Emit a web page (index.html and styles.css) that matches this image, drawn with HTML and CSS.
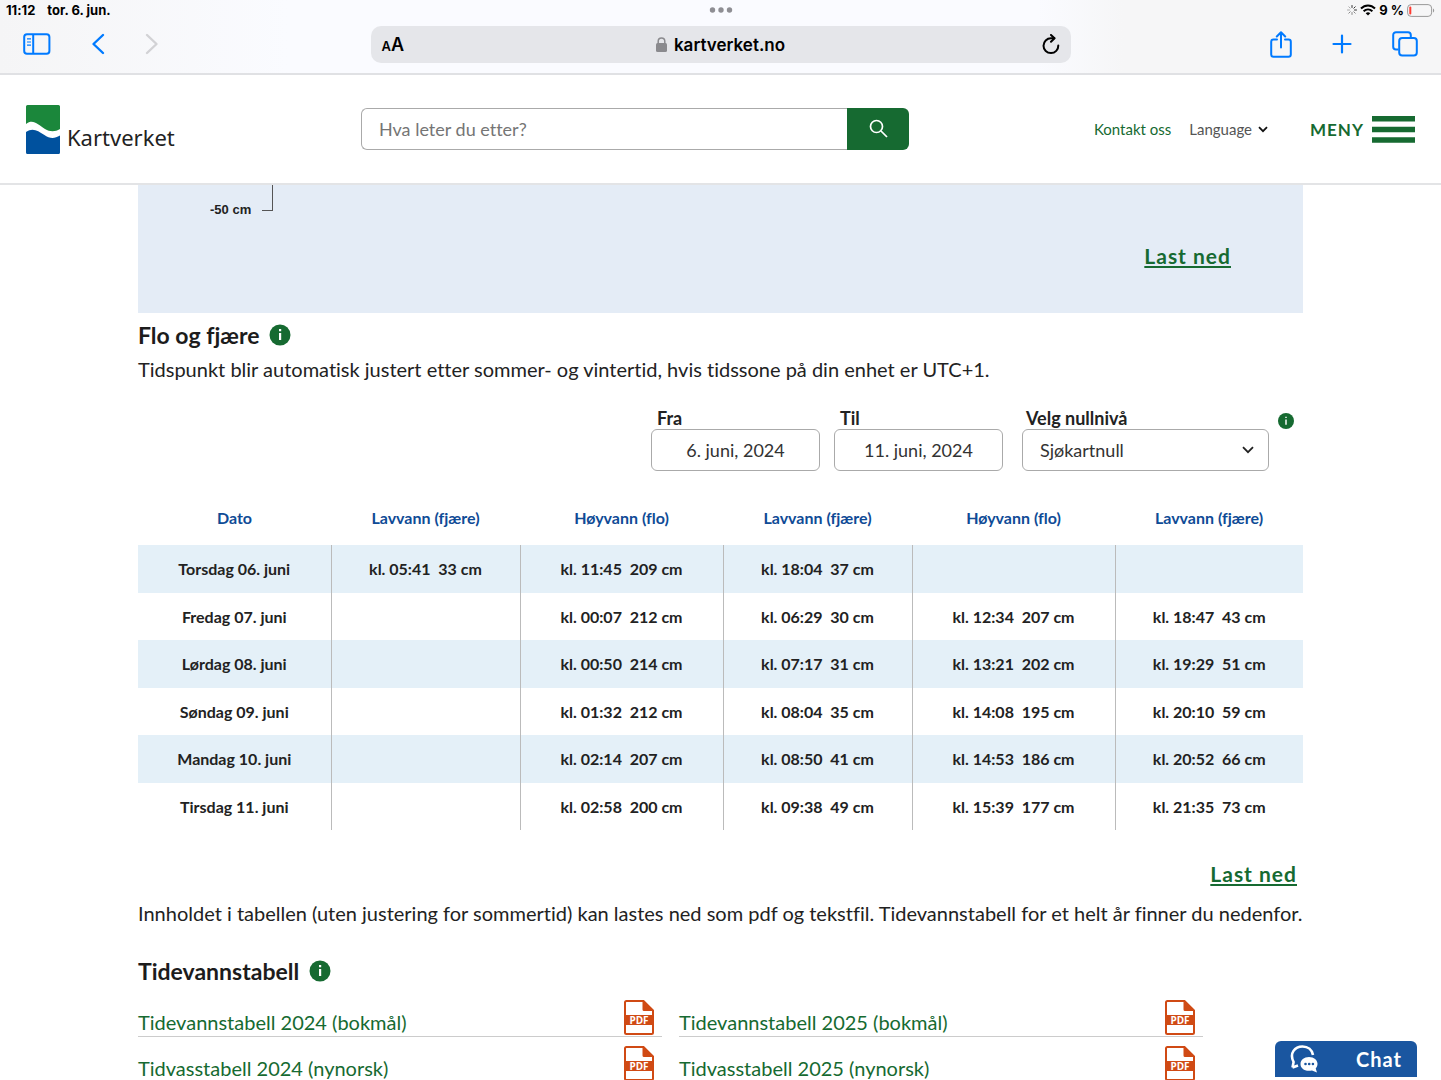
FILE: index.html
```html
<!DOCTYPE html>
<html lang="no">
<head>
<meta charset="utf-8">
<meta name="viewport" content="width=device-width, initial-scale=1">
<title>Kartverket – Flo og fjære</title>
<link rel="stylesheet" href="styles.css">
</head>
<body>
<div class="browser">
  <div class="status">
    <div class="status-left"><span>11:12</span><span>tor. 6. jun.</span></div>
    <svg class="dots" width="24" height="6" viewBox="0 0 24 6" fill="#8e8e93"><circle cx="3.500" cy="3" r="2.700"/><circle cx="12" cy="3" r="2.700"/><circle cx="20.500" cy="3" r="2.700"/></svg>
    <div class="status-right">
      <svg width="10" height="10" viewBox="0 0 10 10" stroke-width="1" stroke-linecap="round" fill="none"><path stroke="#333" d="M5 .5v2M8.200 1.800L6.800 3.200M9.500 5h-2"/><path stroke="#888" d="M8.200 8.200L6.800 6.800M5 9.500v-2M1.800 8.200l1.400-1.400"/><path stroke="#aaa" d="M.5 5h2M1.800 1.800l1.400 1.400"/></svg>
      <svg width="16" height="12" viewBox="0 0 16 12" fill="none" stroke="#000" stroke-width="2"><path d="M1 4.500C5 .4 11 .4 15 4.500M3.600 7.300c2.600-2.500 6.200-2.500 8.800 0"/><path d="M8 11.500L5.700 9.200c1.300-1.200 3.300-1.200 4.600 0z" fill="#000" stroke="none"/></svg>
      <span>9&nbsp;%</span>
      <svg width="28" height="13" viewBox="0 0 28 13"><rect x=".6" y=".6" width="24" height="11.800" rx="3.500" fill="none" stroke="#999"/><rect x="2.300" y="2.500" width="2" height="8" rx="1" fill="#ff3b30"/><path d="M26 4.500c1.600.6 1.600 3.400 0 4z" fill="#999"/></svg>
    </div>
  </div>
  <div class="toolbar">
    <div class="tools-left">
      <button class="tool" aria-label="Sidefelt"><svg width="28" height="22" viewBox="0 0 28 22" fill="none" stroke="#007aff" stroke-width="2"><rect x="1.200" y="1.200" width="25.200" height="19.600" rx="2.800"/><path d="M10.200 1v20"/><path stroke-width="1.200" d="M4 5.800h4M4 9h4M4 12.200h4"/></svg></button>
      <button class="tool" aria-label="Tilbake"><svg width="14" height="22" viewBox="0 0 14 22" fill="none" stroke="#007aff" stroke-width="2.400" stroke-linecap="round" stroke-linejoin="round"><path d="M12 2L2.500 11l9.500 9"/></svg></button>
      <button class="tool" aria-label="Frem"><svg width="14" height="22" viewBox="0 0 14 22" fill="none" stroke="#d2d2d5" stroke-width="2.400" stroke-linecap="round" stroke-linejoin="round"><path d="M2 2l9.500 9L2 20"/></svg></button>
    </div>
    <div class="address">
      <button class="text-size" aria-label="Tekststørrelse"><span class="small-a">A</span>A</button>
      <div class="domain"><svg width="11" height="15" viewBox="0 0 11 15"><rect y="6" width="11" height="9" rx="1.500" fill="#8a8a8e"/><path d="M2.200 6.500V4.300a3.300 3.300 0 0 1 6.600 0v2.200" fill="none" stroke="#8a8a8e" stroke-width="1.500"/></svg><span>kartverket.no</span></div>
      <button class="tool" aria-label="Last på nytt"><svg width="18" height="21" viewBox="0 0 18 21" fill="none" stroke="#000" stroke-width="2" stroke-linecap="round" stroke-linejoin="round"><path d="M16.300 11.500A7.400 7.400 0 1 1 9 4.300h3.300"/><path d="M9 1l3.500 3.300L9 7.800"/></svg></button>
    </div>
    <div class="tools-right">
      <button class="tool" aria-label="Del"><svg width="22" height="27" viewBox="0 0 22 27" fill="none" stroke="#007aff" stroke-width="2" stroke-linecap="round" stroke-linejoin="round"><path d="M7 8.500H3.500A2.300 2.300 0 0 0 1.200 10.800v12.600a2.300 2.300 0 0 0 2.300 2.300h15a2.300 2.300 0 0 0 2.300-2.300V10.800a2.300 2.300 0 0 0-2.300-2.300H15M11 16.500V1.500M6.800 5.500L11 1.300l4.200 4.200"/></svg></button>
      <button class="tool" aria-label="Ny fane"><svg width="20" height="20" viewBox="0 0 20 20" stroke="#007aff" stroke-width="2.200" stroke-linecap="round"><path d="M10 1.500v17M1.500 10h17"/></svg></button>
      <button class="tool" aria-label="Faner"><svg width="26" height="26" viewBox="0 0 26 26" fill="none" stroke="#007aff" stroke-width="2"><rect x="7.200" y="7" width="17.600" height="17.600" rx="3"/><path d="M6.500 18.500H4a2.800 2.800 0 0 1-2.800-2.800V4A2.800 2.800 0 0 1 4 1.200h12A2.800 2.800 0 0 1 18.800 4v2.500"/></svg></button>
    </div>
  </div>

  <div class="page">
    <header class="site-header">
      <a class="logo" href="#"><svg width="34" height="49" viewBox="0 0 34 49"><path d="M1.500 0h31A1.500 1.500 0 0 1 34 1.500V24c-5 3-10 3-15 0C12 19.500 7 13.500 0 19V1.500A1.500 1.500 0 0 1 1.500 0z" fill="#1b873b"/><path d="M0 27c7-5 12-1 18 2.700 6 4 10 4.300 16 .8v17a1.500 1.500 0 0 1-1.500 1.500h-31A1.500 1.500 0 0 1 0 47.500z" fill="#00519e"/></svg><span>Kartverket</span></a>
      <form class="search">
        <input type="text" placeholder="Hva leter du etter?" aria-label="Søk">
        <button type="button" aria-label="Søk"><svg width="20" height="20" viewBox="0 0 20 20" fill="none" stroke="#fff" stroke-width="1.700"><circle cx="8.500" cy="7.500" r="6"/><path d="M13 12l6 6"/></svg></button>
      </form>
      <nav class="site-nav">
        <a href="#">Kontakt oss</a>
        <button class="language">Language<svg width="10" height="7" viewBox="0 0 10 7" fill="none" stroke="#111" stroke-width="1.800"><path d="M1 1.200l4 4 4-4"/></svg></button>
        <button class="menu">MENY<svg width="43" height="27" viewBox="0 0 43 27" fill="#166a31"><path d="M0 0h43v5.500H0zM0 10.700h43v5.500H0zM0 21.300h43v5.500H0z"/></svg></button>
      </nav>
    </header>

    <main class="content">
      <section class="chart">
        <div class="axis"><span>-50 cm</span><i class="tick"></i></div>
        <a class="download" href="#">Last ned</a>
      </section>

      <h2>Flo og fjære <button class="info" aria-label="Informasjon"><svg width="22" height="22" viewBox="0 0 22 22"><circle cx="11" cy="11" r="10.500" fill="#166a31"/><path d="M10 5h2.200v2.200H10zM10 9h2.200v7H10z" fill="#fff"/></svg></button></h2>
      <p class="lead">Tidspunkt blir automatisk justert etter sommer- og vintertid, hvis tidssone på din enhet er UTC+1.</p>

      <form class="filters">
        <div class="field"><label for="from">Fra</label><input id="from" type="text" value="6. juni, 2024"></div>
        <div class="field"><label for="to">Til</label><input id="to" type="text" value="11. juni, 2024"></div>
        <div class="field level"><label for="level">Velg nullnivå</label><div class="select"><select id="level"><option>Sjøkartnull</option></select><svg width="12" height="8" viewBox="0 0 12 8" fill="none" stroke="#222" stroke-width="1.800"><path d="M1 1.200l5 5 5-5"/></svg></div></div>
        <button type="button" class="info" aria-label="Om nullnivå"><svg width="16" height="16" viewBox="0 0 22 22"><circle cx="11" cy="11" r="11" fill="#166a31"/><path d="M10 5h2v2h-2zM10 9h2v7h-2z" fill="#fff"/></svg></button>
      </form>

      <table class="tides">
        <colgroup><col class="c-date"><col class="c-low"><col class="c-high"><col class="c-low"><col class="c-high"><col></colgroup>
        <thead><tr><th>Dato</th><th>Lavvann (fjære)</th><th>Høyvann (flo)</th><th>Lavvann (fjære)</th><th>Høyvann (flo)</th><th>Lavvann (fjære)</th></tr></thead>
        <tbody>
          <tr><td>Torsdag 06. juni</td><td>kl. 05:41&nbsp; 33 cm</td><td>kl. 11:45&nbsp; 209 cm</td><td>kl. 18:04&nbsp; 37 cm</td><td></td><td></td></tr>
          <tr><td>Fredag 07. juni</td><td></td><td>kl. 00:07&nbsp; 212 cm</td><td>kl. 06:29&nbsp; 30 cm</td><td>kl. 12:34&nbsp; 207 cm</td><td>kl. 18:47&nbsp; 43 cm</td></tr>
          <tr><td>Lørdag 08. juni</td><td></td><td>kl. 00:50&nbsp; 214 cm</td><td>kl. 07:17&nbsp; 31 cm</td><td>kl. 13:21&nbsp; 202 cm</td><td>kl. 19:29&nbsp; 51 cm</td></tr>
          <tr><td>Søndag 09. juni</td><td></td><td>kl. 01:32&nbsp; 212 cm</td><td>kl. 08:04&nbsp; 35 cm</td><td>kl. 14:08&nbsp; 195 cm</td><td>kl. 20:10&nbsp; 59 cm</td></tr>
          <tr><td>Mandag 10. juni</td><td></td><td>kl. 02:14&nbsp; 207 cm</td><td>kl. 08:50&nbsp; 41 cm</td><td>kl. 14:53&nbsp; 186 cm</td><td>kl. 20:52&nbsp; 66 cm</td></tr>
          <tr><td>Tirsdag 11. juni</td><td></td><td>kl. 02:58&nbsp; 200 cm</td><td>kl. 09:38&nbsp; 49 cm</td><td>kl. 15:39&nbsp; 177 cm</td><td>kl. 21:35&nbsp; 73 cm</td></tr>
        </tbody>
      </table>
      <div class="table-download"><a class="download" href="#">Last ned</a></div>
      <p class="note">Innholdet i tabellen (uten justering for sommertid) kan lastes ned som pdf og tekstfil. Tidevannstabell for et helt år finner du nedenfor.</p>

      <h2 class="files-title">Tidevannstabell <button class="info" aria-label="Informasjon"><svg width="22" height="22" viewBox="0 0 22 22"><circle cx="11" cy="11" r="10.500" fill="#166a31"/><path d="M10 5h2.200v2.200H10zM10 9h2.200v7H10z" fill="#fff"/></svg></button></h2>
      <svg class="defs" width="0" height="0" aria-hidden="true"><defs><symbol id="pdf" viewBox="0 0 30 35"><path d="M2.500 1h17L29 10.500V32.500A1.500 1.500 0 0 1 27.500 34h-25A1.500 1.500 0 0 1 1 32.500v-30A1.500 1.500 0 0 1 2.500 1z" fill="#fff" stroke="#d04a14" stroke-width="2"/><path d="M18.500 0L30 11h-10a1.500 1.500 0 0 1-1.500-1.500zM1 15h28v10H1z" fill="#d04a14"/><text x="15" y="23.500" text-anchor="middle" font-family="Open Sans, sans-serif" font-weight="700" font-size="10" fill="#fff">PDF</text></symbol></defs></svg>
      <div class="files">
        <a href="#">Tidevannstabell 2024 (bokmål)<svg width="30" height="35"><use href="#pdf"/></svg></a>
        <a href="#">Tidevannstabell 2025 (bokmål)<svg width="30" height="35"><use href="#pdf"/></svg></a>
        <a href="#">Tidvasstabell 2024 (nynorsk)<svg width="30" height="35"><use href="#pdf"/></svg></a>
        <a href="#">Tidvasstabell 2025 (nynorsk)<svg width="30" height="35"><use href="#pdf"/></svg></a>
      </div>
    </main>
  </div>
  <button class="chat"><svg width="28" height="28" viewBox="0 0 28 28"><path d="M2.500 22.500L3.600 17C-1 8 5 1.500 12.500 1.500c5.500 0 9.500 3.500 10.500 8.500M2.500 22.500l5.500-2" fill="none" stroke="#fff" stroke-width="2.600"/><path d="M19 12c5 0 8.500 3 8.500 6.800 0 2-.8 3.500-1.800 4.600l1.300 4.100-5-2c-7 1.500-11.500-2-11.500-6.500C10.500 15 14 12 19 12z" fill="#fff"/><g fill="#1a56a0"><circle cx="15.500" cy="19" r="1.300"/><circle cx="19.200" cy="19" r="1.300"/><circle cx="22.900" cy="19" r="1.300"/></g></svg><span>Chat</span></button>
</div>
</body>
</html>
```
FILE: styles.css
```css
* { box-sizing: border-box; }
body { margin: 0; background: #fff; color: #222; font-family: Lato, "Noto Sans", sans-serif; font-size: 20px; font-variant-ligatures: none; }
button { border: 0; padding: 0; background: none; color: inherit; font: inherit; cursor: pointer; }
button svg, a svg { display: block; flex: none; }
a { color: #166a31; text-decoration: none; }
.defs { position: absolute; }
.browser { height: 100vh; display: flex; flex-direction: column; overflow: hidden; }

/* Browser chrome */
.status, .toolbar { flex: none; background: linear-gradient(90deg, #f5f5f6, #fafbff 20%, #fafbff 72%, #f6f6f7 78%, #f6f6f7); font-family: Inter, "Liberation Sans", sans-serif; color: #000; }
.status { height: 21px; padding: 0 6px 1px; display: grid; grid-template-columns: 1fr auto 1fr; align-items: center; font-size: 13px; font-weight: 700; line-height: 20px; }
.status-left { display: flex; gap: 12px; }
.status-right { display: flex; justify-content: flex-end; align-items: center; gap: 3px; }
.toolbar { height: 54px; padding: 0 23px; display: grid; grid-template-columns: 1fr minmax(0, 700px) 1fr; align-items: start; border-bottom: 2px solid #e0e1e4; }
.tools-left, .tools-right { height: 46px; display: flex; align-items: center; }
.tools-left { gap: 40px; }
.tools-right { justify-content: flex-end; gap: 40px; }
.address { height: 37px; margin-top: 5px; padding: 0 11px; display: grid; grid-template-columns: 1fr auto 1fr; align-items: center; border-radius: 10px; background: #e5e6ea; }
.text-size { justify-self: start; font-size: 18px; font-weight: 600; }
.small-a { font-size: 13px; }
.domain { display: flex; align-items: center; gap: 7px; font-size: 17px; font-weight: 600; }
.address .tool { justify-self: end; }

/* Site header */
.page { flex: 1; min-height: 0; overflow: hidden; }
.site-header { height: 110px; padding: 0 26px; display: flex; align-items: center; border-bottom: 2px solid #e3e4e6; }
.logo { flex: 0 0 335px; display: flex; align-items: flex-end; gap: 7px; color: #222; font-family: "Noto Sans", sans-serif; font-size: 22px; line-height: 34px; }
.search { flex: 0 1 548px; display: flex; }
.search input { flex: 1; min-width: 0; height: 42px; padding: 0 17px; border: 1px solid #aaa; border-right: 0; border-radius: 6px 0 0 6px; font: 18px Lato, sans-serif; font-variant-ligatures: none; }
.search input::placeholder { color: #757575; }
.search button { width: 62px; display: flex; align-items: center; justify-content: center; border-radius: 0 6px 6px 0; background: #166a31; }
.site-nav { margin-left: auto; display: flex; align-items: center; font-size: 15px; }
.language { margin-left: 18px; display: flex; align-items: center; gap: 6px; color: #555; }
.menu { margin-left: 42px; display: flex; align-items: center; gap: 8px; color: #166a31; font-size: 17px; font-weight: 700; letter-spacing: 1px; }

/* Content */
.content { padding: 0 138px; }
.chart { height: 128px; padding: 0 72px; background: #e4ecf6; display: flex; align-items: flex-start; justify-content: space-between; }
.axis { display: flex; align-items: flex-end; gap: 11px; font: 700 13px/16px "Liberation Sans", Arial, sans-serif; }
.axis span { padding-top: 17px; }
.tick { width: 11px; height: 26px; margin-bottom: 7px; border: solid #555; border-width: 0 1px 1px 0; }
.download { font-size: 21px; font-weight: 700; line-height: 24px; letter-spacing: 1px; text-decoration: underline; text-decoration-thickness: 2px; text-underline-offset: 2px; }
.chart .download { margin-top: 59px; }
h2 { margin: 8px 0 0; display: flex; align-items: center; gap: 10px; font-size: 23px; line-height: 28px; color: #1c1c1c; }
p { margin: 0; line-height: 28px; }
.lead { margin-top: 6px; }
.filters { margin-top: 24px; padding-right: 9px; display: flex; justify-content: flex-end; align-items: flex-start; }
.field { width: 169px; margin-right: 14px; display: flex; flex-direction: column; font-size: 18px; }
.field label { padding-left: 6px; font-weight: 700; line-height: 22px; }
.level label { padding-left: 4px; }
.field input, .field select { width: 100%; height: 42px; border: 1px solid #aaa; border-radius: 6px; background: #fff; color: #333; font: inherit; }
.field input { text-align: center; }
.field.level { width: 247px; margin-right: 9px; margin-left: 5px; }
.select { display: flex; align-items: center; }
.select select { appearance: none; padding: 0 17px; }
.select svg { flex: none; margin-left: -27px; margin-right: 15px; pointer-events: none; }
.filters .info { margin-top: 6px; }

.tides { width: 100%; margin-top: 21px; table-layout: fixed; border-collapse: collapse; font-size: 16px; line-height: 20px; font-weight: 700; text-align: center; }
.c-date { width: 193px; }
.c-low { width: 189px; }
.c-high { width: 203px; }
.tides th { height: 53px; padding: 0 0 2px; color: #0f4b96; }
.tides td { height: 47px; padding: 0; }
.tides tr:nth-child(odd) td { height: 48px; background: #e4f0f8; }
.tides td + td { border-left: 1px solid #bbb; }
.table-download { padding: 32px 6px 0 0; display: flex; justify-content: flex-end; }
.note { margin-top: 13px; white-space: nowrap; }
.files-title { margin-top: 30px; }
.files { margin-top: 6px; padding-right: 100px; display: grid; grid-template-columns: 1fr 1fr; column-gap: 17px; }
.files a { height: 46px; padding-right: 8px; display: flex; align-items: flex-end; justify-content: space-between; border-bottom: 1px solid #ccc; line-height: 27px; }
.files svg { margin-bottom: 1px; }
.chat { position: fixed; right: 24px; bottom: 3px; width: 142px; height: 36px; padding: 0 15px; display: flex; align-items: center; justify-content: space-between; border-radius: 6px 6px 0 0; background: #1a56a0; color: #fff; font-weight: 700; letter-spacing: 1px; }
```
